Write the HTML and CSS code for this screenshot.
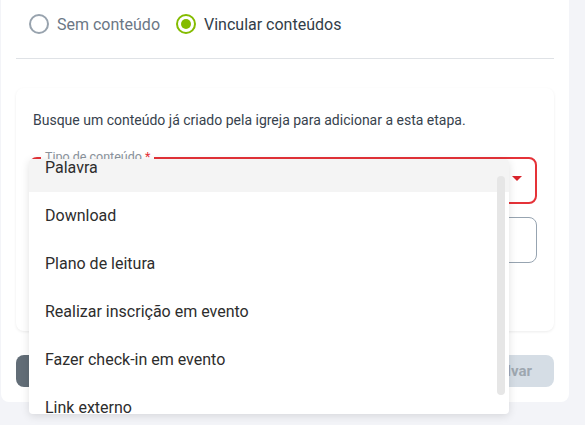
FILE: index.html
```html
<!DOCTYPE html>
<html lang="pt-BR">
<head>
<meta charset="UTF-8">
<meta name="viewport" content="width=device-width, initial-scale=1.0">
<title>Etapa - conteúdo</title>
<link rel="stylesheet" href="styles.css">
</head>
<body>

<div class="panel">
  <div class="radios">
    <label class="radio">
      <span class="radio-dot"></span>
      <span class="radio-text">Sem conteúdo</span>
    </label>
    <label class="radio checked">
      <span class="radio-dot"></span>
      <span class="radio-text">Vincular conteúdos</span>
    </label>
  </div>

  <hr class="divider">

  <div class="card">
    <p class="hint">Busque um conteúdo já criado pela igreja para adicionar a esta etapa.</p>

    <div class="field error">
      <span class="field-label">Tipo de conteúdo <span class="req">*</span></span>
      <span class="arrow"></span>
    </div>

    <div class="field plain"></div>
  </div>

  <div class="actions">
    <button class="btn btn-back">Voltar</button>
    <button class="btn btn-save">Salvar</button>
  </div>
</div>

<!-- select menu open over the form -->
<div class="menu">
  <ul class="menu-list">
    <li class="active">Palavra</li>
    <li>Download</li>
    <li>Plano de leitura</li>
    <li>Realizar inscrição em evento</li>
    <li>Fazer check-in em evento</li>
    <li>Link externo</li>
  </ul>
  <div class="scroll-thumb"></div>
</div>

</body>
</html>
```

FILE: styles.css
```css
body {
  margin: 0;
  padding: 0;
  background: #f3f4f8;
  font-family: Roboto, 'Liberation Sans', sans-serif;
  overflow: hidden;
  height: 425px;
}

.panel {
  margin-left: 1px;
  width: 538px;
  padding: 0 15px 15px 15px;
  background: #fff;
  border-radius: 0 0 8px 8px;
}

.radios {
  display: flex;
  align-items: center;
  gap: 16px;
  height: 48px;
  padding-left: 13px;
}

.radio {
  display: flex;
  align-items: center;
  gap: 8px;
  font-size: 16px;
}

.radio-dot {
  width: 16px;
  height: 16px;
  border: 2px solid #98a3ae;
  border-radius: 50%;
  position: relative;
}

.radio-text {
  color: #6b7785;
}

.radio.checked .radio-dot {
  border-color: #84bc00;
}

.radio.checked .radio-dot::after {
  content: '';
  position: absolute;
  top: 3px;
  left: 3px;
  width: 10px;
  height: 10px;
  border-radius: 50%;
  background: #84bc00;
}

.radio.checked .radio-text {
  color: #323d48;
}

.divider {
  border: 0;
  border-top: 1px solid #dfe2e6;
  margin: 10px 0 29px 0;
}

.card {
  border-radius: 8px;
  box-shadow: 0 1px 3px rgba(0, 0, 0, 0.08);
  padding: 24px 17px 68px 13px;
}

.hint {
  margin: 0 0 29px 4px;
  font-size: 14px;
  line-height: 16px;
  color: #37424d;
}

.field {
  border-radius: 8px;
  position: relative;
  box-sizing: border-box;
}

.field.error {
  height: 47px;
  border: 2px solid #e53238;
}

.field-label {
  position: absolute;
  left: 10px;
  top: -9px;
  padding: 0 4px;
  background: #fff;
  font-size: 12.5px;
  line-height: 14px;
  color: #8a939c;
}

.req {
  color: #e53238;
}

.arrow {
  position: absolute;
  right: 13px;
  top: 17px;
  border-left: 5px solid transparent;
  border-right: 5px solid transparent;
  border-top: 5px solid #d9232b;
}

.field.plain {
  margin-top: 13px;
  height: 46px;
  border: 1.5px solid #97a4b1;
}

.actions {
  display: flex;
  justify-content: space-between;
  margin-top: 24px;
}

.btn {
  height: 32px;
  border: 0;
  border-radius: 8px;
  font-family: Roboto, 'Liberation Sans', sans-serif;
  font-size: 15px;
  font-weight: 700;
  padding: 0 22px;
}

.btn-back {
  background: #626d77;
  color: #fff;
}

.btn-save {
  background: #d5dde5;
  color: #9ea7b0;
}

.menu {
  position: absolute;
  left: 29px;
  top: 159px;
  width: 480px;
  height: 255px;
  background: #fff;
  border-radius: 4px;
  box-shadow: 0 2px 8px rgba(0, 0, 0, 0.12);
  overflow: hidden;
}

.menu-list {
  list-style: none;
  margin: -15px 0 0 0;
  padding: 0;
}

.menu-list li {
  height: 48px;
  line-height: 48px;
  padding-left: 16px;
  font-size: 16px;
  color: #2d2d2d;
}

.menu-list li.active {
  background: #f4f4f4;
}

.scroll-thumb {
  position: absolute;
  right: 4px;
  top: 17px;
  width: 8px;
  height: 219px;
  border-radius: 4px;
  background: #e6e6e6;
}
```
